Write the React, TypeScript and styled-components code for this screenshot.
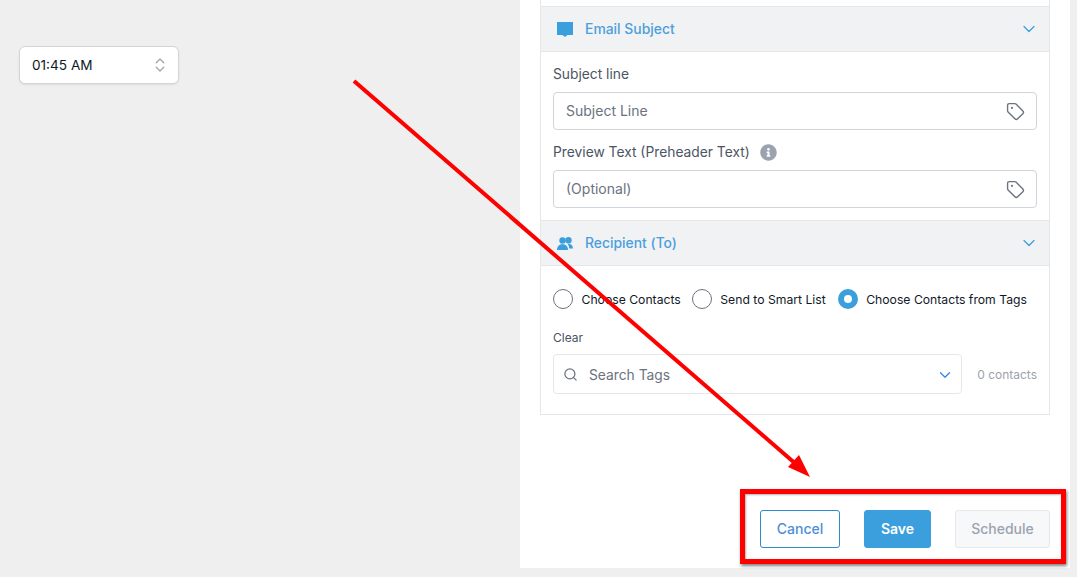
import React from 'react';
import styled, { createGlobalStyle } from 'styled-components';
import { Tag, Search, ChevronDown, ChevronsUpDown } from 'lucide-react';
import { FaInfoCircle } from 'react-icons/fa';

const GlobalStyle = createGlobalStyle`
  html, body {
    margin: 0;
    padding: 0;
    background: #efefef;
  }
  * {
    box-sizing: border-box;
  }
  body {
    font-family: Inter, "Noto Sans", sans-serif;
    color: #111827;
  }
`;

const Page = styled.div`
  position: relative;
  width: 1077px;
  height: 577px;
  overflow: hidden;
  display: flex;
  align-items: flex-start;
  background: #efefef;
`;

const LeftColumn = styled.div`
  width: 520px;
  padding: 46px 0 0 19px;
`;

const TimePicker = styled.div`
  width: 160px;
  height: 38px;
  display: flex;
  align-items: center;
  justify-content: space-between;
  padding: 0 9px 0 12px;
  background: #fff;
  border: 1px solid #d1d5db;
  border-radius: 6px;
  box-shadow: 0 1px 2px rgba(0, 0, 0, 0.08);
  font-size: 13.6px;
  color: #111827;
  svg {
    color: #9ca3af;
  }
`;

const Panel = styled.div`
  width: 550px;
  height: 568px;
  background: #fff;
  padding: 0 20px;
`;

const Card = styled.div`
  padding-top: 6px;
  border: 1px solid #e5e7eb;
  border-top: 0;
`;

const SectionHeader = styled.div`
  height: 46px;
  display: flex;
  align-items: center;
  padding: 0 10px 0 16px;
  background: #f1f2f4;
  border-top: 1px solid #e5e7eb;
  border-bottom: 1px solid #e5e7eb;
  color: #4c9fdc;
  font-size: 13.9px;
  font-weight: 500;
  svg.lead {
    color: #3b9fdd;
    margin-right: 12px;
    flex: none;
  }
  svg.chevron {
    margin-left: auto;
    color: #3b9fdd;
  }
`;

const SubjectBody = styled.div`
  padding: 12px 12px 12px;
`;

const FieldLabel = styled.div`
  height: 20px;
  display: flex;
  align-items: center;
  gap: 10px;
  margin-bottom: 8px;
  font-size: 13.8px;
  line-height: 20px;
  color: #4b5563;
  svg {
    color: #9ca3af;
  }
`;

const TextField = styled.div`
  height: 38px;
  display: flex;
  align-items: center;
  justify-content: space-between;
  padding: 0 11px 1px 12px;
  margin-bottom: 12px;
  border: 1px solid #d1d5db;
  border-radius: 4px;
  font-size: 14px;
  color: #6b7280;
  svg {
    color: #6b7280;
    margin-top: 1px;
  }
  &:last-child {
    margin-bottom: 0;
  }
`;

const RecipientBody = styled.div`
  padding: 23px 12px 20px;
`;

const RadioRow = styled.div`
  display: flex;
  align-items: center;
  height: 20px;
`;

const RadioOption = styled.div<{ $gap: number }>`
  display: flex;
  align-items: center;
  gap: 8.5px;
  margin-right: ${p => p.$gap}px;
  font-size: 12.2px;
  color: #111827;
  white-space: nowrap;
`;

const RadioCircle = styled.span<{ $checked?: boolean }>`
  width: 20px;
  height: 20px;
  flex: none;
  border-radius: 50%;
  background: #fff;
  border: ${p => (p.$checked ? '6.5px solid #3b9fdd' : '1px solid #6b7280')};
`;

const ClearLabel = styled.div`
  margin: 20px 0 7px;
  font-size: 12px;
  line-height: 18px;
  color: #4b5563;
`;

const SearchRow = styled.div`
  display: flex;
  align-items: center;
  justify-content: space-between;
`;

const SearchBox = styled.div`
  width: 409px;
  height: 40px;
  display: flex;
  align-items: center;
  padding: 1px 7px 0 9px;
  border: 1px solid #e5e7eb;
  border-radius: 4px;
  font-size: 13.8px;
  color: #6b7280;
  svg.search {
    margin-right: 11px;
    color: #6b7280;
  }
  svg.chevron {
    margin-left: auto;
    color: #3b82f6;
  }
`;

const ContactCount = styled.span`
  font-size: 12px;
  color: #9ca3af;
`;

const Actions = styled.div`
  display: flex;
  justify-content: flex-end;
  gap: 24px;
  margin-top: 95px;
`;

const Button = styled.button<{ $variant: 'outline' | 'primary' | 'disabled' }>`
  height: 38px;
  padding: 0 0 1px;
  border-radius: 3px;
  font-family: inherit;
  font-size: 14px;
  font-weight: ${p => (p.$variant === 'primary' ? 600 : 500)};
  width: ${p => (p.$variant === 'outline' ? 80 : p.$variant === 'primary' ? 67 : 95)}px;
  color: ${p => (p.$variant === 'outline' ? '#4c8fd8' : p.$variant === 'primary' ? '#fff' : '#9ca3af')};
  background: ${p => (p.$variant === 'outline' ? '#fff' : p.$variant === 'primary' ? '#3b9fdd' : '#f7f8fa')};
  border: 1px solid ${p => (p.$variant === 'outline' ? '#2f8ccb' : p.$variant === 'primary' ? '#3b9fdd' : '#e5e7eb')};
`;

const Highlight = styled.div`
  position: absolute;
  left: 740px;
  top: 489px;
  width: 326px;
  height: 75px;
  border: 5px solid #ff0000;
  box-shadow: 1px 2px 3px rgba(0, 0, 0, 0.5), inset 1px 1px 2px rgba(0, 0, 0, 0.3);
`;

const ArrowLayer = styled.svg`
  position: absolute;
  left: 0;
  top: 0;
  pointer-events: none;
`;

const EmailIcon = () => (
  <svg className="lead" width="16" height="15" viewBox="0 0 16 15">
    <path d="M0 0h16v13h-5.500l-2.500 2-2.500-2H0z" fill="currentColor" />
  </svg>
);

const PeopleIcon = () => (
  <svg className="lead" width="16" height="13" viewBox="0 0 16 13">
    <path d="M11.500 0a2.700 2.700 0 0 1 0 6.400 2.700 2.700 0 0 1 0-6.400z" fill="currentColor" />
    <path d="M10.500 6.800c3-.4 5.500 1.400 5.500 4.700h-3.800c0-1.800-.6-3.300-1.700-4.700z" fill="currentColor" />
    <circle cx="5.500" cy="3.500" r="3.200" fill="currentColor" />
    <path d="M0 13c0-3.800 2.500-5.700 5.500-5.700S11 9.200 11 13z" fill="currentColor" />
  </svg>
);

export default function App() {
  return (
    <>
      <GlobalStyle />
      <Page>
        <LeftColumn>
          <TimePicker>
            01:45 AM
            <ChevronsUpDown size={18} strokeWidth={1.7} />
          </TimePicker>
        </LeftColumn>
        <Panel>
          <Card>
            <SectionHeader>
              <EmailIcon />
              Email Subject
              <ChevronDown className="chevron" size={20} strokeWidth={1.5} />
            </SectionHeader>
            <SubjectBody>
              <FieldLabel>Subject line</FieldLabel>
              <TextField>
                Subject Line
                <Tag size={19} strokeWidth={1.75} />
              </TextField>
              <FieldLabel>
                Preview Text (Preheader Text)
                <FaInfoCircle size={17} />
              </FieldLabel>
              <TextField>
                (Optional)
                <Tag size={19} strokeWidth={1.75} />
              </TextField>
            </SubjectBody>
            <SectionHeader>
              <PeopleIcon />
              Recipient (To)
              <ChevronDown className="chevron" size={20} strokeWidth={1.5} />
            </SectionHeader>
            <RecipientBody>
              <RadioRow>
                <RadioOption $gap={11}>
                  <RadioCircle />
                  Choose Contacts
                </RadioOption>
                <RadioOption $gap={12}>
                  <RadioCircle />
                  Send to Smart List
                </RadioOption>
                <RadioOption $gap={0}>
                  <RadioCircle $checked />
                  Choose Contacts from Tags
                </RadioOption>
              </RadioRow>
              <ClearLabel>Clear</ClearLabel>
              <SearchRow>
                <SearchBox>
                  <Search className="search" size={15} />
                  Search Tags
                  <ChevronDown className="chevron" size={18} strokeWidth={1.75} />
                </SearchBox>
                <ContactCount>0 contacts</ContactCount>
              </SearchRow>
            </RecipientBody>
          </Card>
          <Actions>
            <Button $variant="outline">Cancel</Button>
            <Button $variant="primary">Save</Button>
            <Button $variant="disabled">Schedule</Button>
          </Actions>
        </Panel>
        <ArrowLayer width="1077" height="577">
          <line x1="354" y1="81" x2="797" y2="465" stroke="#ff0000" strokeWidth="4" />
          <polygon points="810,477 788,467 799,455" fill="#ff0000" />
        </ArrowLayer>
        <Highlight />
      </Page>
    </>
  );
}
